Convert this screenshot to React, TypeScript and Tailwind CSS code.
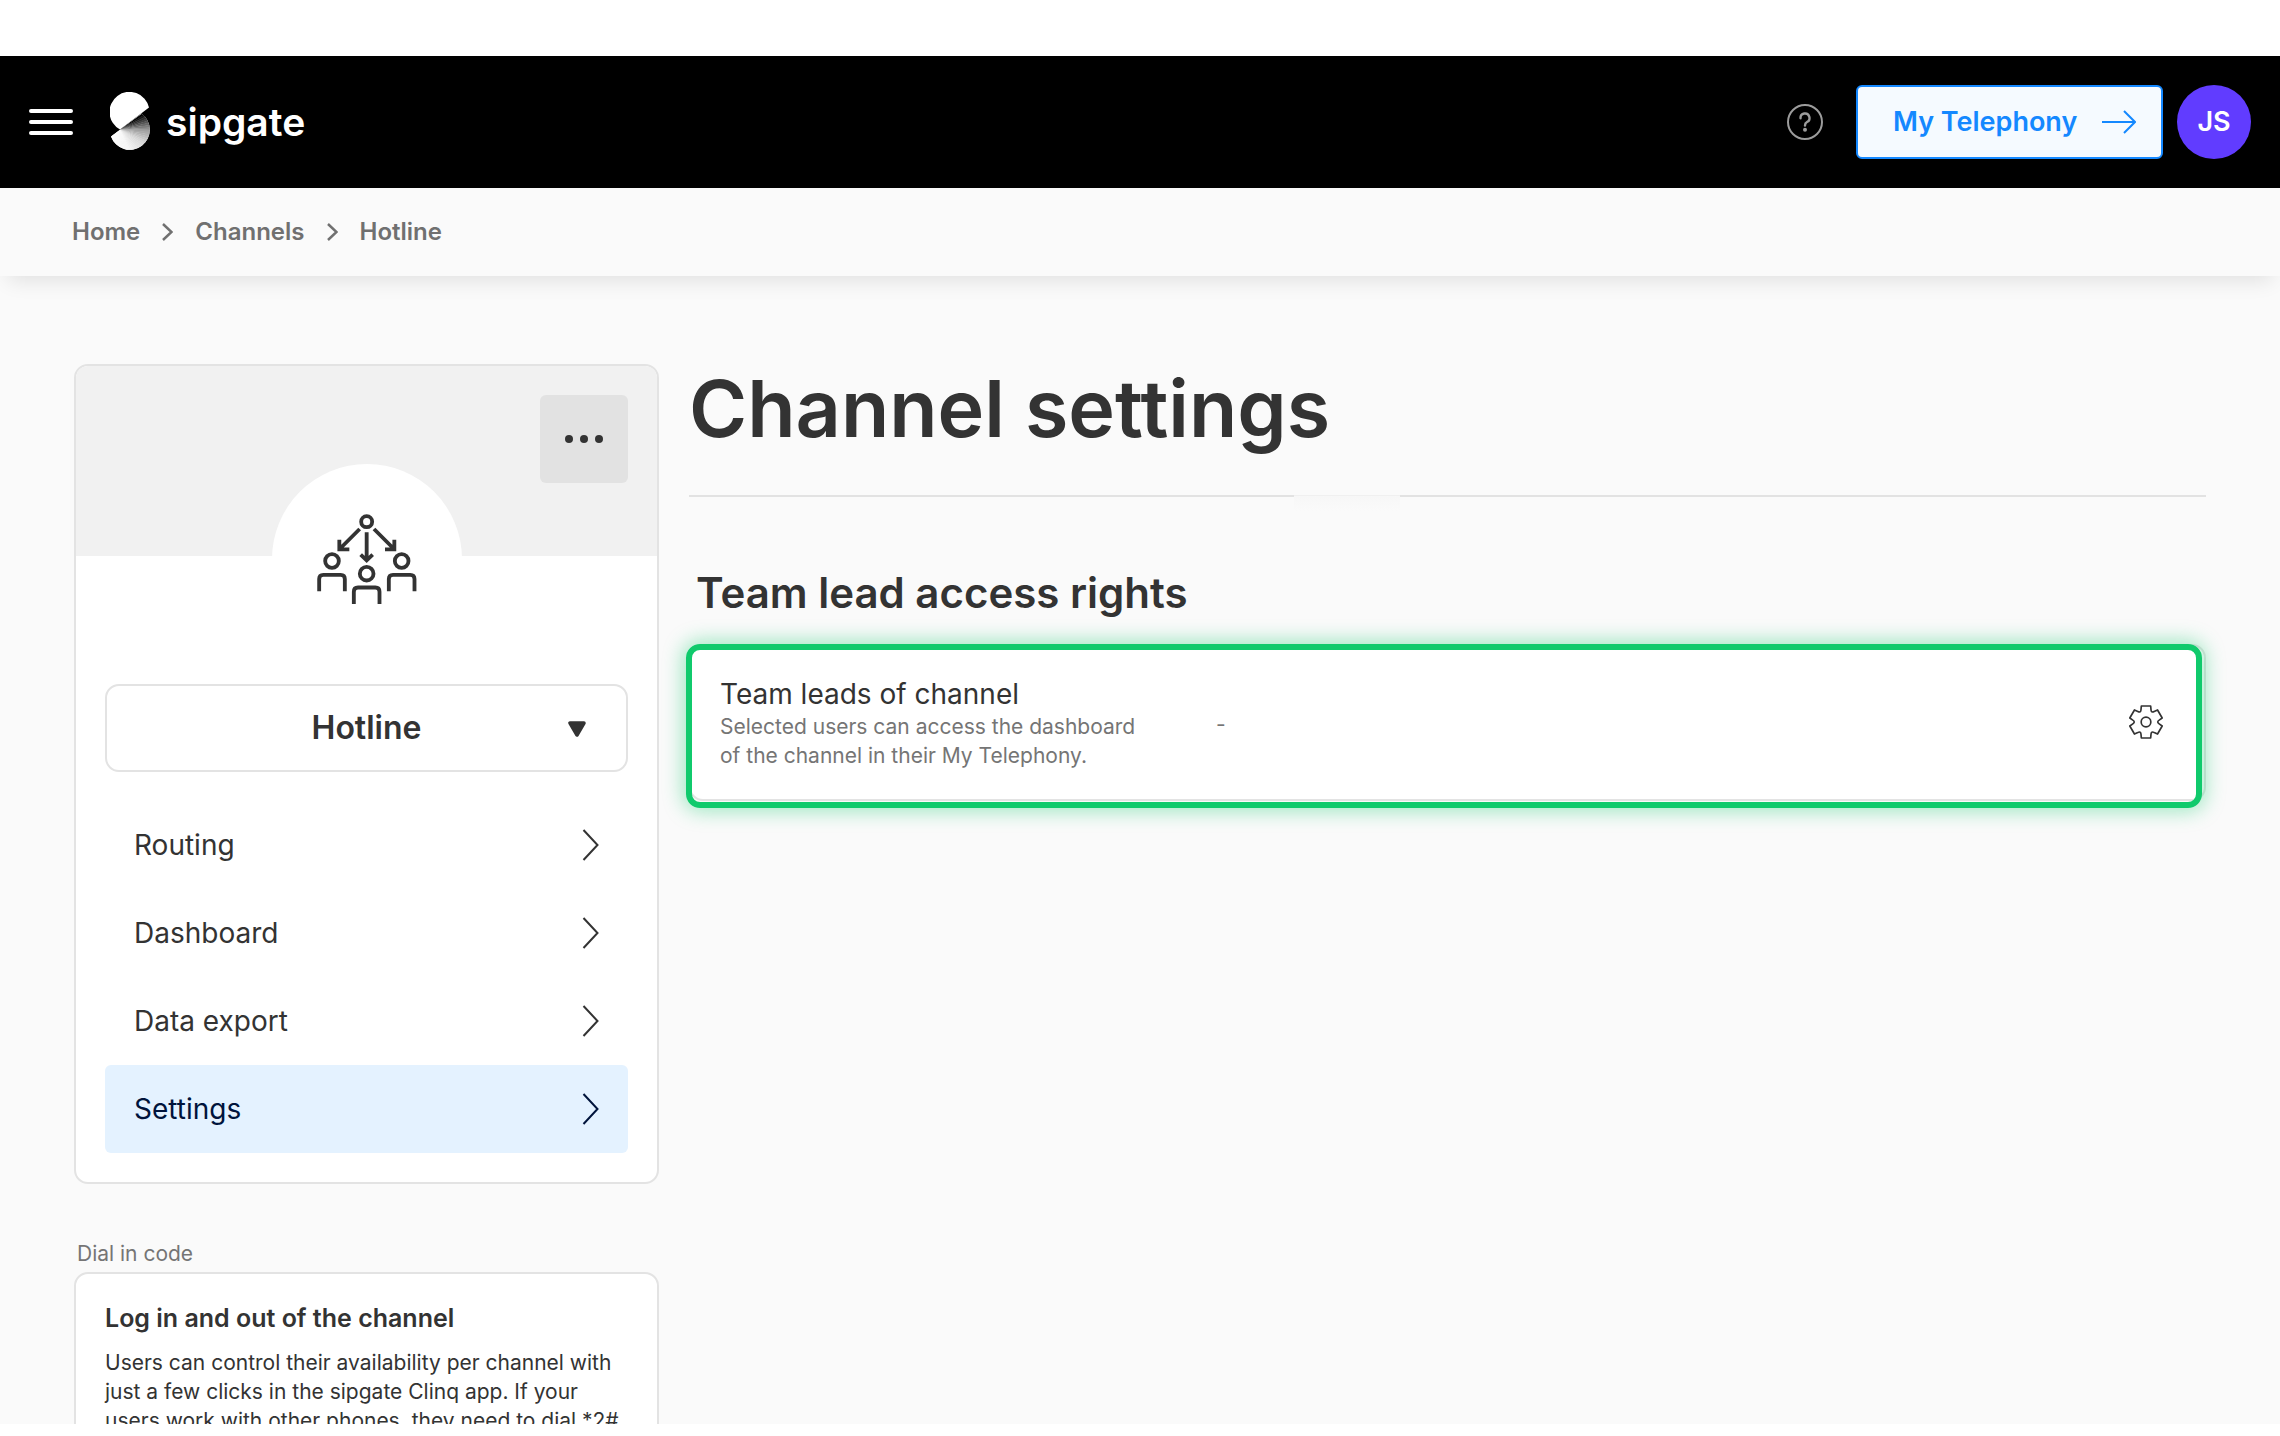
import { Fragment } from "react";

const LOGO_STEPS = 40;
const LOGO_START = -36;
const LOGO_SWEEP = 180;

function logoShade(t: number) {
  const stops: [number, number][] = [
    [0, 5],
    [0.08, 70],
    [0.2, 160],
    [0.34, 215],
    [0.55, 245],
    [1, 255],
  ];
  for (let i = 1; i < stops.length; i++) {
    if (t <= stops[i][0]) {
      const [a, va] = stops[i - 1];
      const [b, vb] = stops[i];
      const v = Math.round(va + ((t - a) / (b - a)) * (vb - va));
      return `rgb(${v},${v},${v})`;
    }
  }
  return "#fff";
}

function Logo() {
  const point = (deg: number) => {
    const r = (deg * Math.PI) / 180;
    return `${(10 + 60 * Math.cos(r)).toFixed(2)},${(37.5 + 60 * Math.sin(r)).toFixed(2)}`;
  };
  const step = LOGO_SWEEP / LOGO_STEPS;
  return (
    <svg width="40" height="60" viewBox="0 0 40 60" aria-hidden="true">
      <defs>
        <clipPath id="logo-lower">
          <path d="M1 44.5 L31.5 21.5 A20 20 0 1 1 1 44.5 Z" />
        </clipPath>
      </defs>
      <g clipPath="url(#logo-lower)">
        <rect width="40" height="60" fill="#fff" />
        {Array.from({ length: LOGO_STEPS }, (_, i) => (
          <polygon
            key={i}
            points={`10,37.5 ${point(LOGO_START + i * step)} ${point(LOGO_START + (i + 1) * step + 1)}`}
            fill={logoShade(i / LOGO_STEPS)}
          />
        ))}
      </g>
      <path d="M39 15.5 A20 20 0 1 0 10 37.5 Z" fill="#fff" />
    </svg>
  );
}

function MenuIcon() {
  return (
    <svg width="44" height="28" viewBox="0 0 44 28" stroke="#fff" strokeWidth="4" strokeLinecap="round" aria-hidden="true">
      <path d="M2 3H42M2 14H42M2 25H42" />
    </svg>
  );
}

function HelpIcon() {
  return (
    <svg width="36" height="36" viewBox="0 0 36 36" fill="none" stroke="#9c9c9c" strokeWidth="2" aria-hidden="true">
      <circle cx="18" cy="18" r="17" />
      <path d="M13.5 14.2 A4.5 4.5 0 1 1 20 18 Q18 19 18 21.5" strokeWidth="2.4" strokeLinecap="round" />
      <circle cx="18" cy="25.8" r="2" fill="#9c9c9c" stroke="none" />
    </svg>
  );
}

function ArrowIcon() {
  return (
    <svg width="34" height="24" viewBox="0 0 34 24" fill="none" stroke="#1488ff" strokeWidth="2" aria-hidden="true">
      <path d="M0 12H33M22 1L33 12L22 23" />
    </svg>
  );
}

function CrumbIcon() {
  return (
    <svg width="11" height="18" viewBox="0 0 11 18" fill="none" stroke="#707070" strokeWidth="2.5" aria-hidden="true">
      <path d="M1 1L9.5 9L1 17" />
    </svg>
  );
}

function ChevronIcon() {
  return (
    <svg width="17" height="32" viewBox="0 0 17 32" fill="none" stroke="currentColor" strokeWidth="2" aria-hidden="true">
      <path d="M1.5 1L15.5 16L1.5 31" />
    </svg>
  );
}

function Person({ x, y }: { x: number; y: number }) {
  return (
    <g transform={`translate(${x} ${y})`}>
      <circle r="20.5" />
      <path d="M-38.500 91V54Q-38.500 41.500 -26 41.500H26Q38.500 41.500 38.500 54V91" />
    </g>
  );
}

function TeamIcon() {
  return (
    <svg width="130" height="120" viewBox="4 -5 390 360" fill="none" stroke="#333" strokeWidth="11.5" aria-hidden="true">
      <circle cx="198" cy="63" r="16.500" />
      <path d="M177 85L117 145M116 117V146H146" />
      <path d="M220 85L280 145M281 117V146H253" />
      <path d="M198 95V178M180 162L198 179L216 162" />
      <Person x={94} y={181} />
      <Person x={303} y={181} />
      <Person x={198} y={219} />
    </svg>
  );
}

function GearIcon() {
  const parts: string[] = [];
  const rotate = (x: number, y: number, deg: number) => {
    const r = (deg * Math.PI) / 180;
    return `${(x * Math.cos(r) - y * Math.sin(r)).toFixed(1)} ${(x * Math.sin(r) + y * Math.cos(r)).toFixed(1)}`;
  };
  for (let k = 0; k < 6; k++) {
    const a = k * 60;
    parts.push(
      `${k === 0 ? "M" : "L"}${rotate(-14, -48, a)} L${rotate(14, -48, a)} L${rotate(15, -37, a)} Q${rotate(15.5, -26.8, a)} ${rotate(-15, -37, a + 60)}`,
    );
  }
  return (
    <svg width="36" height="36" viewBox="-54 -54 108 108" fill="none" stroke="#333" strokeWidth="5" strokeLinejoin="round" aria-hidden="true">
      <path d={parts.join(" ") + " Z"} />
      <circle r="14.5" />
    </svg>
  );
}

const crumbs = ["Home", "Channels", "Hotline"];
const items = ["Routing", "Dashboard", "Data export", "Settings"];

export default function App() {
  return (
    <div className="flex h-screen flex-col overflow-hidden bg-white pt-14 pb-3 font-['Inter',sans-serif] text-[#333]">
      <div className="flex min-h-0 flex-1 flex-col overflow-hidden bg-[#fafafa]">
        <header className="flex h-[132px] shrink-0 items-center bg-black px-[29px]">
          <button type="button" aria-label="Menu">
            <MenuIcon />
          </button>
          <a href="#" className="ml-[37px] flex items-center gap-4 text-white">
            <Logo />
            <span className="text-[39px] leading-[44px] font-semibold">sipgate</span>
          </a>
          <div className="ml-auto flex items-center">
            <button type="button" aria-label="Help" className="mr-[33px]">
              <HelpIcon />
            </button>
            <a
              href="#"
              className="flex h-[74px] w-[307px] items-center justify-between rounded-md border-2 border-[#1488ff] bg-[#f5faff] pr-[25px] pl-[35px] text-[27px] font-semibold text-[#1488ff]"
            >
              My Telephony
              <ArrowIcon />
            </a>
            <button
              type="button"
              className="ml-[14px] size-[74px] rounded-full bg-[#613cff] text-[27px] font-semibold text-white"
            >
              JS
            </button>
          </div>
        </header>

        <nav
          aria-label="Breadcrumb"
          className="relative flex h-[88px] shrink-0 items-center gap-[22px] bg-[#fafafa] px-[72px] text-[24px] font-semibold text-[#707070] shadow-[0_12px_20px_-8px_rgba(0,0,0,0.11)]"
        >
          {crumbs.map((c, i) => (
            <Fragment key={c}>
              {i > 0 && <CrumbIcon />}
              <a href="#">{c}</a>
            </Fragment>
          ))}
        </nav>

        <div className="flex items-start gap-[30px] px-[74px] pt-[88px]">
          <aside className="w-[585px] shrink-0">
            <section className="overflow-hidden rounded-[14px] border-2 border-[#e3e3e3] bg-white">
              <div className="relative h-[190px] bg-[#f1f1f1]">
                <button
                  type="button"
                  aria-label="More"
                  className="absolute top-[29px] right-[29px] flex size-[88px] items-center justify-center gap-[7px] rounded-md bg-[#e2e2e2]"
                >
                  <span className="size-2 rounded-full bg-[#333]" />
                  <span className="size-2 rounded-full bg-[#333]" />
                  <span className="size-2 rounded-full bg-[#333]" />
                </button>
                <div className="absolute -bottom-[98px] left-1/2 flex size-[190px] -translate-x-1/2 items-center justify-center rounded-full bg-white">
                  <TeamIcon />
                </div>
              </div>
              <div className="px-[29px] pt-32 pb-[29px]">
                <button
                  type="button"
                  className="relative h-[88px] w-full rounded-[14px] border-2 border-[#e3e3e3] text-[32px] font-semibold"
                >
                  Hotline
                  <svg
                    width="18"
                    height="16"
                    viewBox="0 0 18 16"
                    className="absolute top-[35px] right-10"
                    aria-hidden="true"
                  >
                    <path
                      d="M2 2H16L9 14Z"
                      fill="#333"
                      stroke="#333"
                      strokeWidth="3.5"
                      strokeLinejoin="round"
                    />
                  </svg>
                </button>
                <nav aria-label="Channel" className="mt-[29px] flex flex-col text-[28px]">
                  {items.map((item) => (
                    <a
                      key={item}
                      href="#"
                      className={
                        item === "Settings"
                          ? "flex h-[88px] items-center justify-between rounded-md bg-[#e4f2ff] px-[29px] text-[#00143c]"
                          : "flex h-[88px] items-center justify-between rounded-md px-[29px]"
                      }
                    >
                      {item}
                      <ChevronIcon />
                    </a>
                  ))}
                </nav>
              </div>
            </section>

            <p className="mt-[54px] pl-[3px] text-[21px] leading-8 text-[#757575]">Dial in code</p>
            <section className="mt-[2px] rounded-[14px] border-2 border-[#e3e3e3] bg-white px-[29px] py-7">
              <h3 className="text-[25px] leading-8 font-semibold">Log in and out of the channel</h3>
              <p className="mt-[14px] text-[21px] leading-[29px] whitespace-nowrap">
                Users can control their availability per channel with
                <br />
                just a few clicks in the sipgate Clinq app. If your
                <br />
                users work with other phones, they need to dial *2#
              </p>
            </section>
          </aside>

          <main className="min-w-0 flex-1">
            <h1 className="text-[79px] leading-[88px] font-semibold">Channel settings</h1>
            <div className="mt-[43px] flex h-[2px]" role="separator">
              <span className="w-[605px] bg-[#e2e2e2]" />
              <span className="h-4 w-[106px] border-t border-[#f0f0f0] bg-linear-to-b from-[#f7f7f7] to-[#fafafa]" />
              <span className="flex-1 bg-[#e2e2e2]" />
            </div>
            <h2 className="mt-[72px] pl-[7px] text-[42px] leading-[48px] font-semibold">
              Team lead access rights
            </h2>
            <section className="relative mt-[27px] flex h-[157px] rounded-[14px] border-2 border-[#e3e3e3] bg-white px-[29px] pt-[30px]">
              <div className="w-[496px]">
                <h3 className="text-[28px] leading-9">Team leads of channel</h3>
                <p className="text-[21px] leading-[29px] text-[#757575]">
                  Selected users can access the dashboard
                  <br />
                  of the channel in their My Telephony.
                </p>
              </div>
              <p className="mt-[34px] text-[21px] leading-[29px] text-[#757575]">-</p>
              <button type="button" aria-label="Edit team leads" className="mt-7 mr-[11px] ml-auto size-9">
                <GearIcon />
              </button>
              <div className="pointer-events-none absolute -top-[2px] right-[2px] -bottom-[9px] -left-[5px] rounded-[14px] border-[6px] border-[#10ca6c] shadow-[0_0_20px_3px_rgba(16,202,108,0.4)]" />
            </section>
          </main>
        </div>
      </div>
    </div>
  );
}
